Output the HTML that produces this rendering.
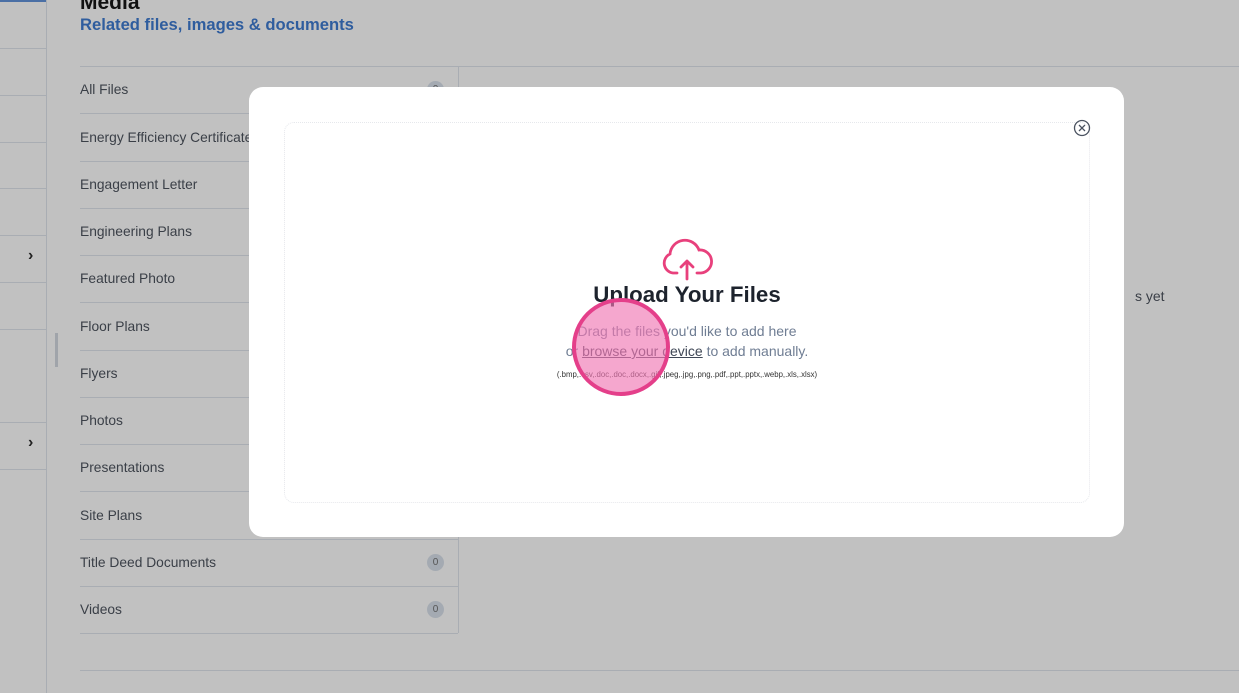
<!DOCTYPE html><html><head><style>
body{margin:0;width:1239px;height:693px;background:#c1c1c1;font-family:"Liberation Sans",sans-serif;position:relative;overflow:hidden}
.a{position:absolute}
.sl{position:absolute;left:0;width:46px;height:1px;background:#a9adb3}
.row{position:absolute;left:80px;width:378px;height:47px;border-bottom:1px solid #a9adb3;font-size:13.8px;color:#3a3f47;line-height:47px}
.bd{position:absolute;right:14px;top:15px;width:17px;height:17px;border-radius:50%;background:#a4aab2;font-size:10px;line-height:17px;text-align:center;color:#555}
</style></head><body>
<div class="a" style="left:46px;top:0;width:1px;height:693px;background:#a9adb3"></div>
<div class="a" style="left:0;top:0;width:46px;height:2px;background:#4a6fa5"></div>
<div class="sl" style="top:48px"></div><div class="sl" style="top:95px"></div><div class="sl" style="top:142px"></div><div class="sl" style="top:188px"></div><div class="sl" style="top:235px"></div><div class="sl" style="top:282px"></div><div class="sl" style="top:329px"></div><div class="sl" style="top:422px"></div><div class="sl" style="top:469px"></div>
<div class="a" style="left:28px;top:247px;font-size:16px;font-weight:bold;color:#222">›</div>
<div class="a" style="left:28px;top:434px;font-size:16px;font-weight:bold;color:#222">›</div>
<div class="a" style="left:55px;top:333px;width:3px;height:34px;background:#a0a4aa"></div>
<div class="a" style="left:80px;top:-9px;font-size:21px;font-weight:bold;color:#111">Media</div>
<div class="a" style="left:80px;top:15px;font-size:16.6px;font-weight:bold;color:#2f5d9e">Related files, images &amp; documents</div>
<div class="a" style="left:80px;top:66px;width:1159px;height:1px;background:#a9adb3"></div>
<div class="a" style="left:458px;top:67px;width:1px;height:566px;background:#a9adb3"></div>
<div class="a" style="left:80px;top:670px;width:1159px;height:1px;background:#a9adb3"></div>
<div class="a" style="left:1135px;top:288px;font-size:14px;color:#3a3f47">s yet</div>
<div class="row" style="top:66px">All Files<span class="bd">0</span></div>
<div class="row" style="top:114px">Energy Efficiency Certificate</div>
<div class="row" style="top:161px">Engagement Letter</div>
<div class="row" style="top:208px">Engineering Plans</div>
<div class="row" style="top:255px">Featured Photo</div>
<div class="row" style="top:303px">Floor Plans</div>
<div class="row" style="top:350px">Flyers</div>
<div class="row" style="top:397px">Photos</div>
<div class="row" style="top:444px">Presentations</div>
<div class="row" style="top:492px">Site Plans</div>
<div class="row" style="top:539px">Title Deed Documents<span class="bd">0</span></div>
<div class="row" style="top:586px">Videos<span class="bd">0</span></div>
<div class="a" style="left:249px;top:87px;width:875px;height:450px;background:#fff;border-radius:14px"></div>
<div class="a" style="left:284px;top:122px;width:804px;height:379px;border:1px dotted #e6e8ec;border-radius:10px"></div>
<svg class="a" style="left:1073px;top:119px" width="18" height="18" viewBox="0 0 18 18"><circle cx="9" cy="9" r="7.5" fill="none" stroke="#4a5260" stroke-width="1.3"/><path d="M6 6L12 12M12 6L6 12" stroke="#4a5260" stroke-width="1.3"/></svg>
<svg class="a" style="left:660px;top:238px" width="54" height="44" viewBox="0 0 54 44"><path d="M17 35H13A10 10 0 0 1 10 16 A15 15 0 0 1 39 12 A11.5 11.5 0 0 1 41 35H37" fill="none" stroke="#e8407c" stroke-width="2.8" stroke-linecap="round"/><path d="M27 41V23M21 29L27 23L33 29" fill="none" stroke="#e8407c" stroke-width="2.8" stroke-linecap="round" stroke-linejoin="round"/></svg>
<div class="a" style="left:284px;width:806px;top:282px;text-align:center;font-size:22.3px;font-weight:bold;color:#1d232d">Upload Your Files</div>
<div class="a" style="left:284px;width:806px;top:321px;text-align:center;font-size:14px;color:#6f7d93;line-height:20px">Drag the files you'd like to add here<br>or <u style="color:#3f4756">browse your device</u> to add manually.</div>
<div class="a" style="left:284px;width:806px;top:370px;text-align:center;font-size:7.8px;color:#333">(.bmp,.csv,.doc,.doc,.docx,.gif,.jpeg,.jpg,.png,.pdf,.ppt,.pptx,.webp,.xls,.xlsx)</div>
<div class="a" style="left:572px;top:298px;width:90px;height:90px;border-radius:50%;background:rgba(240,120,180,0.65);border:4px solid #e43f8a"></div>
</body></html>
